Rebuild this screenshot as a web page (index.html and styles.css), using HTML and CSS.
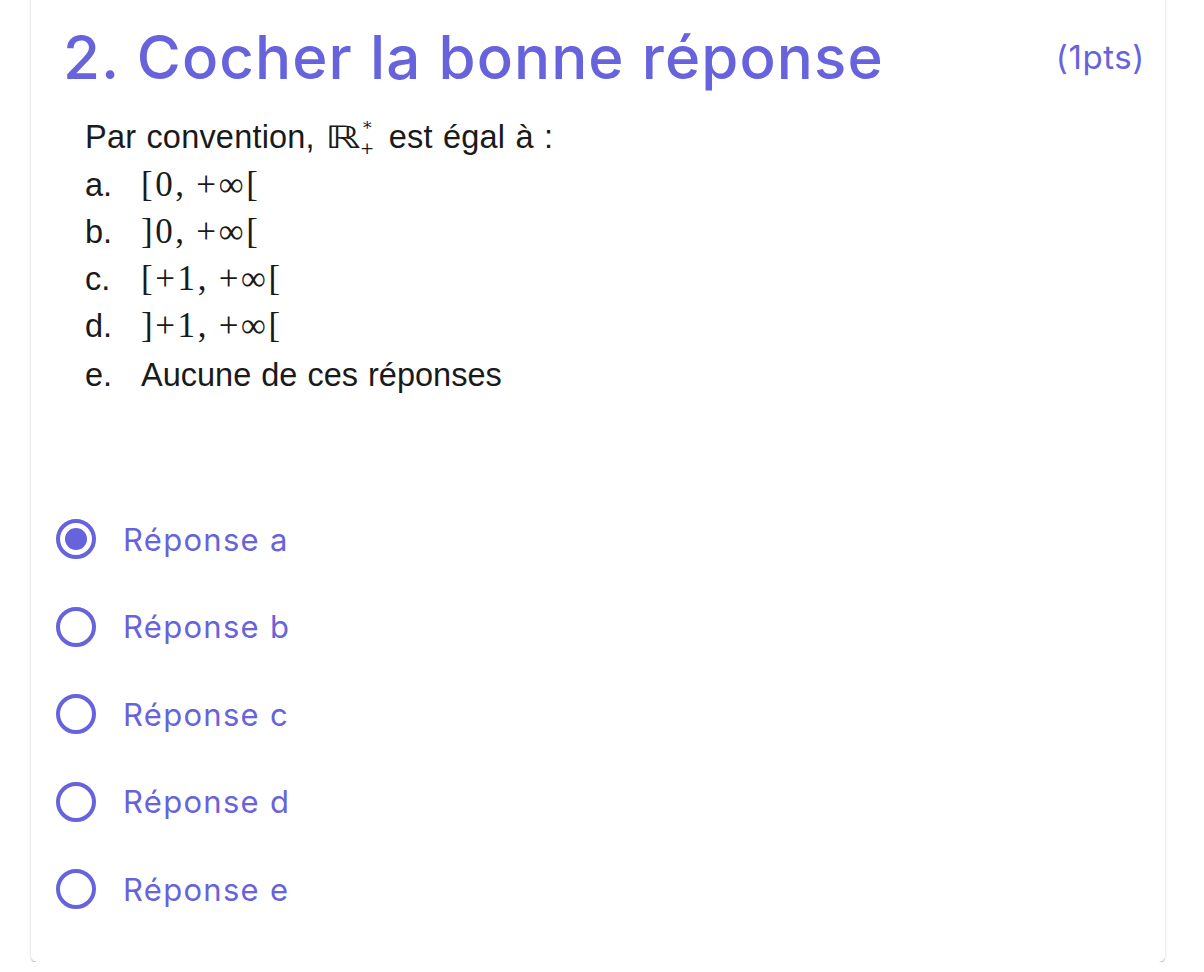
FILE: index.html
```html
<!DOCTYPE html>
<html lang="fr">
<head>
<meta charset="utf-8">
<title>Question 2</title>
<link rel="stylesheet" href="styles.css">
</head>
<body>
<div class="card">
  <div class="header">
    <h2 class="title">2. Cocher la bonne réponse</h2>
    <span class="points">(1pts)</span>
  </div>
  <div class="statement">
    <p class="intro">Par convention, <span class="bb">ℝ</span><span class="supsub"><span class="sup">*</span><span class="sub">+</span></span> est égal à :</p>
    <ol class="choices">
      <li><span class="letter">a.</span><span class="math">[0,&#8201;+∞[</span></li>
      <li><span class="letter">b.</span><span class="math">]0,&#8201;+∞[</span></li>
      <li><span class="letter">c.</span><span class="math">[+1,&#8201;+∞[</span></li>
      <li><span class="letter">d.</span><span class="math">]+1,&#8201;+∞[</span></li>
      <li class="last"><span class="letter">e.</span><span>Aucune de ces réponses</span></li>
    </ol>
  </div>
  <div class="answers">
    <label class="answer"><span class="radio checked"></span><span class="answer-label">Réponse a</span></label>
    <label class="answer"><span class="radio"></span><span class="answer-label">Réponse b</span></label>
    <label class="answer"><span class="radio"></span><span class="answer-label">Réponse c</span></label>
    <label class="answer"><span class="radio"></span><span class="answer-label">Réponse d</span></label>
    <label class="answer"><span class="radio"></span><span class="answer-label">Réponse e</span></label>
  </div>
</div>
</body>
</html>
```
FILE: styles.css
```css
html, body {
  margin: 0;
  padding: 0;
  background: #ffffff;
}

body {
  font-family: Inter, "Noto Sans", sans-serif;
  color: #6763dc;
}

.card {
  box-sizing: border-box;
  width: 1134px;
  margin: -20px 0 0 31px;
  height: 982px;
  padding: 40px 20px 0 25px;
  background: #fff;
  border-radius: 6px;
  box-shadow: 0 2px 2px -1px rgba(0,0,0,0.45), 0 0 3px 0 rgba(0,0,0,0.14);
}

.header {
  display: flex;
  justify-content: space-between;
  align-items: center;
  padding-left: 7px;
  height: 74px;
}

.title {
  margin: 0;
  font-size: 60px;
  font-weight: 500;
  line-height: 74px;
  letter-spacing: 1.1px;
}

.points {
  font-size: 33px;
  font-weight: 400;
  letter-spacing: 0.6px;
}

.statement {
  padding: 20px 0 0 29px;
  color: #1a1a1a;
  font-family: "Liberation Sans", Arial, sans-serif;
  font-size: 32.5px;
  word-spacing: 1px;
}

.intro {
  margin: 0;
  line-height: 47px;
  letter-spacing: 0.2px;
}

.bb {
  display: inline-block;
  width: 35px;
  font-family: "DejaVu Sans", sans-serif;
  font-size: 31px;
  transform: scaleX(1.45);
  transform-origin: left center;
}

.supsub {
  display: inline-block;
  vertical-align: -6px;
  font-family: "DejaVu Serif", serif;
  font-size: 17px;
  line-height: 20px;
  margin-right: 4px;
}

.sup, .sub {
  display: block;
  text-align: center;
}

.math {
  font-family: "Liberation Serif", "DejaVu Serif", serif;
  font-size: 35px;
  letter-spacing: 2.6px;
}

.choices {
  list-style: none;
  margin: 0;
  padding: 0;
}

.choices li {
  display: flex;
  align-items: baseline;
  line-height: 47px;
  height: 47px;
}

.choices li.last {
  margin-top: 3px;
}

.letter {
  width: 56px;
}

.answers {
  display: flex;
  flex-direction: column;
  gap: 39.5px;
  margin-top: 116px;
}

.answer {
  display: flex;
  align-items: center;
  gap: 27px;
  height: 48px;
}

.radio {
  box-sizing: border-box;
  width: 40px;
  height: 40px;
  border: 4px solid #6763dc;
  border-radius: 50%;
  display: flex;
  align-items: center;
  justify-content: center;
}

.radio.checked::after {
  content: "";
  width: 22px;
  height: 22px;
  border-radius: 50%;
  background: #6763dc;
}

.answer-label {
  font-size: 31px;
  letter-spacing: 1.3px;
}
```
